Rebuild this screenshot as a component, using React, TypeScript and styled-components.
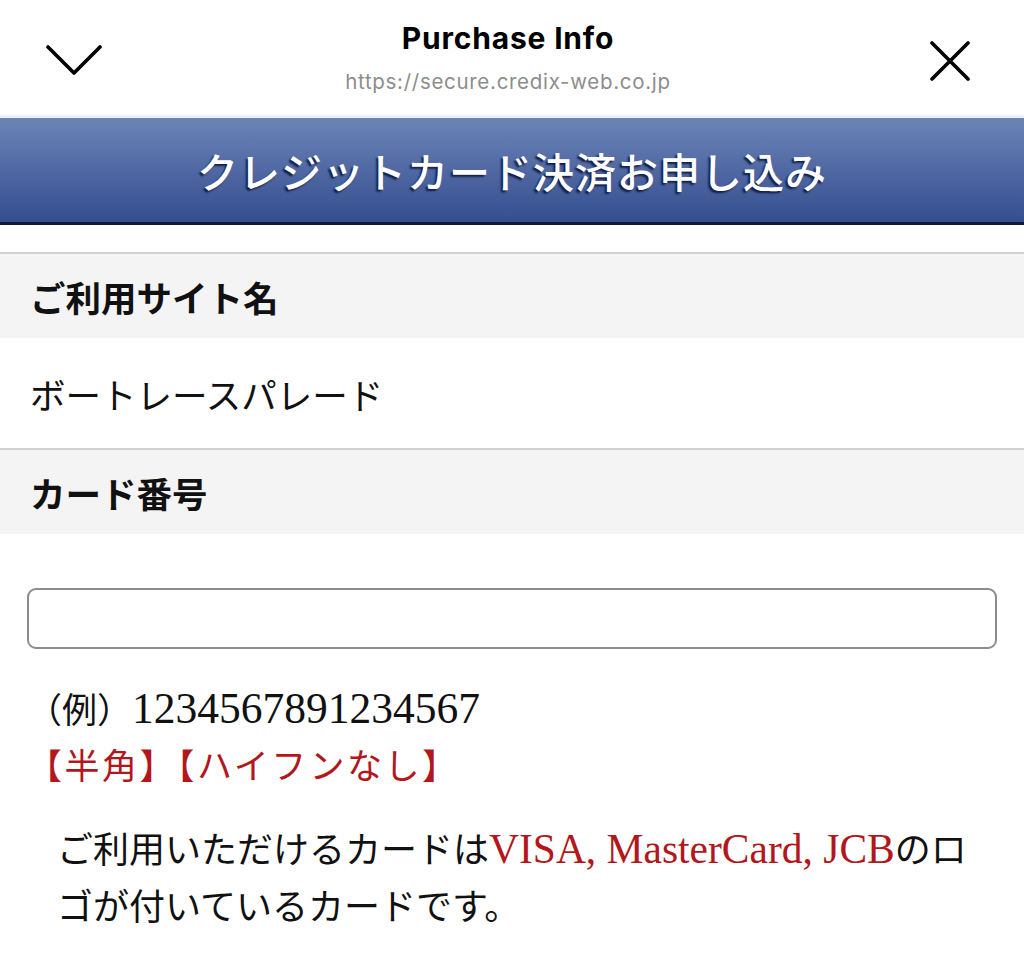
import styled, { createGlobalStyle } from "styled-components";

const JP = `"Liberation Serif", "Noto Sans CJK JP", serif`;
const RED = "#b3161b";

const GlobalStyle = createGlobalStyle`
  html, body {
    margin: 0;
    padding: 0;
    background: #ffffff;
  }
  body {
    font-family: ${JP};
    color: #111111;
    -webkit-font-smoothing: antialiased;
  }
`;

const Page = styled.div`
  width: 1024px;
  min-height: 958px;
  background: #ffffff;
`;

const TopBar = styled.header`
  display: grid;
  grid-template-columns: 1fr auto 1fr;
  align-items: start;
  height: 115px;
  padding: 0 54px 0 46px;
  box-sizing: border-box;
`;

const IconButton = styled.button<{ $top: number; $side: "left" | "right" }>`
  margin-top: ${(p) => p.$top}px;
  justify-self: ${(p) => (p.$side === "left" ? "start" : "end")};
  padding: 0;
  border: 0;
  background: none;
  line-height: 0;
  cursor: pointer;
`;

const TitleBlock = styled.div`
  display: flex;
  flex-direction: column;
  align-items: center;
  padding-top: 22px;
  gap: 16px;
`;

const SheetTitle = styled.div`
  font-family: Inter, "Liberation Sans", sans-serif;
  font-weight: 700;
  font-size: 30px;
  line-height: 32px;
  color: #000000;
  letter-spacing: 0.8px;
`;

const SheetUrl = styled.div`
  font-family: Inter, "Liberation Sans", sans-serif;
  font-size: 20.5px;
  line-height: 24px;
  color: #8d8d8d;
  letter-spacing: 0.7px;
`;

const Banner = styled.div`
  height: 104px;
  border-top: 3px solid #edf1f8;
  border-bottom: 3px solid #11183a;
  background: linear-gradient(180deg, #6c84b4 0%, #5069a4 50%, #344f8f 100%);
  display: flex;
  align-items: center;
  justify-content: center;
`;

const BannerTitle = styled.h1`
  margin: 0;
  font-family: "Noto Sans CJK JP", sans-serif;
  font-weight: 500;
  font-size: 41px;
  color: #ffffff;
  letter-spacing: 1px;
  text-shadow: -2px 2px 2px rgba(10, 16, 50, 0.85);
`;

const Form = styled.main`
  margin-top: 27px;
`;

const SectionHead = styled.h2`
  margin: 0;
  height: 84px;
  border-top: 2px solid #d1d1d1;
  background: #f4f4f4;
  display: flex;
  align-items: center;
  padding-left: 30px;
  font-family: "Noto Sans CJK JP", sans-serif;
  font-weight: 700;
  font-size: 35.5px;
  color: #111111;
`;

const ValueRow = styled.div`
  height: 110px;
  display: flex;
  align-items: center;
  padding-left: 30px;
  font-family: "Noto Sans CJK JP", sans-serif;
  font-size: 35.5px;
  color: #111111;
`;

const FieldArea = styled.div`
  padding: 54px 27px 0 27px;
`;

const CardInput = styled.input`
  display: block;
  width: 100%;
  height: 61px;
  box-sizing: border-box;
  border: 2px solid #8c8c8c;
  border-radius: 9px;
  background: #ffffff;
  font-size: 30px;
  padding: 0 14px;
  outline: none;
`;

const Hint = styled.div<{ $red?: boolean }>`
  font-size: 35px;
  line-height: 56px;
  color: ${(p) => (p.$red ? RED : "#111111")};
  letter-spacing: ${(p) => (p.$red ? "2.5px" : "0")};
  white-space: nowrap;
`;

const ExampleHint = styled(Hint)`
  margin-top: 31px;
`;

const Digits = styled.span`
  font-family: "Liberation Serif", serif;
  font-size: 43.5px;
`;

const Notice = styled.p`
  margin: 27px 0 0 0;
  padding: 0 44px 0 57px;
  font-size: 36px;
  line-height: 57px;
  color: #111111;
`;

const Brand = styled.span`
  font-family: "Liberation Serif", serif;
  font-size: 41.5px;
  line-height: 1;
  color: ${RED};
`;

const ChevronDown = () => (
  <svg width="56" height="32" viewBox="0 0 56 32" fill="none">
    <path d="M2 2 L28 28 L54 2" stroke="#000" strokeWidth="3.6" strokeLinecap="round" strokeLinejoin="round" />
  </svg>
);

const CloseIcon = () => (
  <svg width="40" height="40" viewBox="0 0 40 40" fill="none">
    <path d="M2 2 L38 38 M38 2 L2 38" stroke="#000" strokeWidth="3.6" strokeLinecap="round" />
  </svg>
);

const App = (): JSX.Element => {
  return (
    <Page>
      <GlobalStyle />
      <TopBar>
        <IconButton $top={45} $side="left" aria-label="collapse">
          <ChevronDown />
        </IconButton>
        <TitleBlock>
          <SheetTitle>Purchase Info</SheetTitle>
          <SheetUrl>https://secure.credix-web.co.jp</SheetUrl>
        </TitleBlock>
        <IconButton $top={41} $side="right" aria-label="close">
          <CloseIcon />
        </IconButton>
      </TopBar>

      <Banner>
        <BannerTitle>クレジットカード決済お申し込み</BannerTitle>
      </Banner>

      <Form>
        <SectionHead>ご利用サイト名</SectionHead>
        <ValueRow>ボートレースパレード</ValueRow>
        <SectionHead>カード番号</SectionHead>
        <FieldArea>
          <CardInput type="text" inputMode="numeric" />
          <ExampleHint>
            （例）<Digits>1234567891234567</Digits>
          </ExampleHint>
          <Hint $red>【半角】【ハイフンなし】</Hint>
        </FieldArea>
        <Notice>
          ご利用いただけるカードは<Brand>VISA, MasterCard, JCB</Brand>のロゴが付いているカードです。
        </Notice>
      </Form>
    </Page>
  );
};

export default App;
